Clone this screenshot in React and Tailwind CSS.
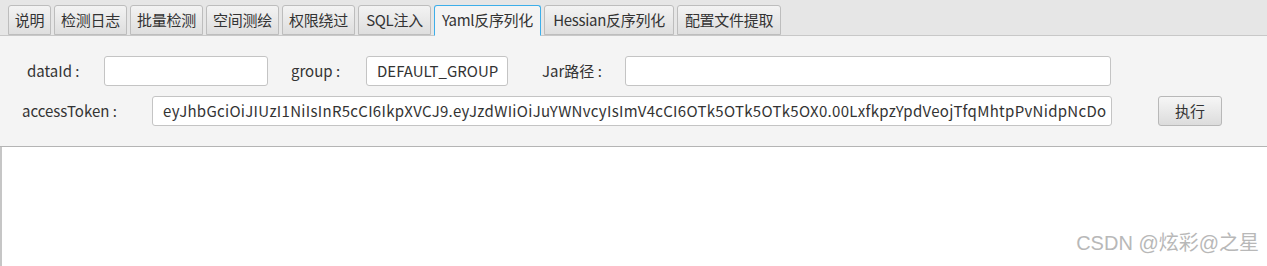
import React from "react";

const tabs = ["说明", "检测日志", "批量检测", "空间测绘", "权限绕过", "SQL注入", "Yaml反序列化", "Hessian反序列化", "配置文件提取"];
const widths = [43, 73, 73, 73, 73, 73, 107, 130, 104];

export default function App() {
  const font = { fontFamily: '"Microsoft YaHei", "Noto Sans CJK SC", "Noto Sans", sans-serif' };
  return (
    <div className="w-[1267px] h-[266px] bg-white flex flex-col overflow-hidden text-[15px] text-[#333]" style={font}>
      <div className="h-[36px] bg-[#e6e6e6] border-b border-[#c8c8c8] flex items-end gap-[3px] pl-[8px]">
        {tabs.map((t, i) => (
          <div
            key={t}
            style={{ width: widths[i] }}
            className={
              i === 6
                ? "h-[31px] -mb-px flex items-center justify-center rounded-t-[3px] border border-[#3daee9] border-b-[#f4f4f4] bg-[#f4f4f4] text-[15px] tracking-[-0.3px] text-[#333] whitespace-nowrap"
                : "h-[30px] flex items-center justify-center rounded-t-[3px] border border-[#bdbdbd] bg-gradient-to-b from-[#f3f3f3] to-[#dedede] text-[15px] tracking-[-0.3px] text-[#333] whitespace-nowrap"
            }
          >
            {t}
          </div>
        ))}
      </div>
      <div className="h-[111px] bg-[#f4f4f4] border-b border-[#b4b4b4] flex flex-col pt-[20px] gap-[10px]">
        <div className="flex items-center h-[30px]">
          <span className="ml-[27px] w-[77px] whitespace-nowrap">dataId :</span>
          <div className="w-[164px] h-[30px] bg-white border border-[#c4c4c4] rounded-[3px]" />
          <span className="ml-[23px] w-[75px] whitespace-nowrap">group :</span>
          <div className="w-[142px] h-[30px] bg-white border border-[#c4c4c4] rounded-[3px] flex items-center pl-[10px] overflow-hidden whitespace-nowrap">DEFAULT_GROUP</div>
          <span className="ml-[34px] w-[83px] whitespace-nowrap">Jar路径 :</span>
          <div className="w-[486px] h-[30px] bg-white border border-[#c4c4c4] rounded-[3px]" />
        </div>
        <div className="flex items-center h-[30px]">
          <span className="ml-[22px] w-[130px] whitespace-nowrap">accessToken :</span>
          <div className="w-[960px] h-[30px] bg-white border border-[#c4c4c4] rounded-[3px] flex items-center pl-[10px] pr-[6px] overflow-hidden whitespace-nowrap text-[15px] tracking-[0.3px]">
            eyJhbGciOiJIUzI1NiIsInR5cCI6IkpXVCJ9.eyJzdWIiOiJuYWNvcyIsImV4cCI6OTk5OTk5OTk5OX0.00LxfkpzYpdVeojTfqMhtpPvNidpNcDo
          </div>
          <div className="ml-[46px] w-[64px] h-[30px] rounded-[3px] border border-[#b8b8b8] bg-gradient-to-b from-[#f6f6f6] to-[#dcdcdc] flex items-center justify-center text-[15px]">执行</div>
        </div>
      </div>
      <div className="flex-1 bg-white border-l-[2px] border-[#c6c6c6] relative">
        <span className="absolute right-[8px] bottom-[8px] text-[20px] text-[#b8b8b8]" style={{ fontFamily: '"Liberation Sans", "Noto Sans CJK SC", sans-serif' }}>CSDN @炫彩@之星</span>
      </div>
    </div>
  );
}
